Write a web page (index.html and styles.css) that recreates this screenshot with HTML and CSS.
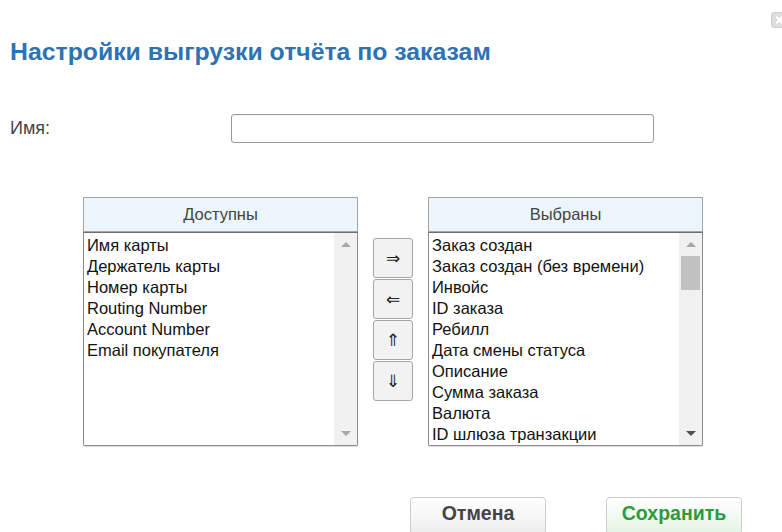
FILE: index.html
```html
<!DOCTYPE html>
<html lang="ru">
<head>
<meta charset="utf-8">
<title>Настройки выгрузки отчёта по заказам</title>
<link rel="stylesheet" href="styles.css">
</head>
<body>
<div class="dialog">
  <button class="close" type="button" aria-label="Закрыть"></button>
  <h1 class="title">Настройки выгрузки отчёта по заказам</h1>

  <div class="form-row">
    <label class="form-label" for="name">Имя:</label>
    <input class="text-input" id="name" type="text">
  </div>

  <div class="picker">
    <div class="column">
      <div class="column-head">Доступны</div>
      <div class="listbox">
        <ul class="items">
          <li>Имя карты</li>
          <li>Держатель карты</li>
          <li>Номер карты</li>
          <li>Routing Number</li>
          <li>Account Number</li>
          <li>Email покупателя</li>
        </ul>
        <div class="scrollbar">
          <span class="arrow arrow-up"></span>
          <span class="track"></span>
          <span class="arrow arrow-down"></span>
        </div>
      </div>
    </div>

    <div class="movers">
      <button class="mover" type="button">⇒</button>
      <button class="mover" type="button">⇐</button>
      <button class="mover" type="button">⇑</button>
      <button class="mover" type="button">⇓</button>
    </div>

    <div class="column">
      <div class="column-head">Выбраны</div>
      <div class="listbox">
        <ul class="items">
          <li>Заказ создан</li>
          <li>Заказ создан (без времени)</li>
          <li>Инвойс</li>
          <li>ID заказа</li>
          <li>Ребилл</li>
          <li>Дата смены статуса</li>
          <li>Описание</li>
          <li>Сумма заказа</li>
          <li>Валюта</li>
          <li>ID шлюза транзакции</li>
        </ul>
        <div class="scrollbar">
          <span class="arrow arrow-up"></span>
          <span class="track"><span class="thumb"></span></span>
          <span class="arrow arrow-down active"></span>
        </div>
      </div>
    </div>
  </div>

  <div class="footer">
    <button class="btn btn-cancel" type="button">Отмена</button>
    <button class="btn btn-save" type="button">Сохранить</button>
  </div>
</div>
</body>
</html>
```

FILE: styles.css
```css
* {
  box-sizing: border-box;
}

html, body {
  margin: 0;
  background: #fff;
  overflow: hidden;
}

body {
  font-family: "Liberation Sans", Arial, sans-serif;
  color: #222;
}

.dialog {
  position: relative;
  width: 782px;
  height: 532px;
  padding: 0 10px;
}

/* close control in the top-right corner, clipped by the window edge;
   the cross is drawn with two rotated bars */
.close {
  position: absolute;
  top: 12px;
  left: 771px;
  width: 18px;
  height: 16px;
  padding: 0;
  border: 1px solid #cfcfcf;
  border-radius: 3px;
  background: #dedede;
}

.close::before,
.close::after {
  content: "";
  position: absolute;
  top: 6px;
  left: 3px;
  width: 9px;
  height: 2px;
  background: #fff;
  transform: rotate(45deg);
}

.close::after {
  transform: rotate(-45deg);
}

.title {
  margin: 0;
  padding-top: 38px;
  font-size: 24.8px;
  line-height: 28px;
  font-weight: bold;
  color: #2e72b4;
}

.form-row {
  display: flex;
  align-items: center;
  margin-top: 48px;
}

.form-label {
  width: 221px;
  font-size: 18px;
  color: #444;
}

.text-input {
  width: 423px;
  height: 29px;
  border: 1px solid #9a9a9a;
  border-radius: 3px;
  background: #fff;
  box-shadow: inset 0 1px 1px rgba(0, 0, 0, 0.06);
}

.picker {
  display: flex;
  align-items: flex-start;
  gap: 15px;
  margin-top: 54px;
  margin-left: 73px;
}

.column {
  width: 275px;
}

.column-head {
  height: 35px;
  border: 1px solid #a3a3a3;
  background: #ebf5fb;
  color: #444;
  font-size: 16.5px;
  line-height: 33px;
  text-align: center;
}

.listbox {
  display: flex;
  height: 214px;
  border: 1px solid #8c8c8c;
  border-top-color: #6f6f6f;
  border-radius: 0 0 2px 2px;
  box-shadow: 0 1px 1px rgba(0, 0, 0, 0.15);
  background: #fff;
}

.items {
  flex: 1;
  margin: 0;
  padding: 2px 0 0 3px;
  list-style: none;
  overflow: hidden;
}

.items li {
  font-size: 16.5px;
  line-height: 21px;
  white-space: nowrap;
  color: #111;
}

.scrollbar {
  display: flex;
  flex-direction: column;
  align-items: center;
  width: 23px;
  background: #f1f1f1;
}

.track {
  flex: 1;
  align-self: stretch;
  padding: 0 2px;
}

.thumb {
  display: block;
  height: 34px;
  background: #c1c1c1;
}

.arrow {
  width: 0;
  height: 0;
  margin: 9px 0;
  border-left: 5px solid transparent;
  border-right: 5px solid transparent;
}

.arrow-up {
  border-bottom: 5px solid #a8a8a8;
}

.arrow-down {
  border-top: 5px solid #a8a8a8;
}

.arrow-down.active {
  border-top-color: #505050;
}

.movers {
  display: flex;
  flex-direction: column;
  gap: 1px;
  margin-top: 41px;
}

.mover {
  width: 40px;
  height: 40px;
  padding: 0;
  border: 1px solid #a6a6a6;
  border-radius: 3px;
  background: #f2f2f2;
  color: #222;
  font: 17px/1 "DejaVu Sans", sans-serif;
}

.footer {
  display: flex;
  justify-content: flex-end;
  gap: 60px;
  margin-top: 51px;
  padding-right: 30px;
}

.btn {
  width: 136px;
  height: 40px;
  padding: 0 0 7px;
  border: 1px solid #cfcfcf;
  border-radius: 4px;
  font: bold 19.5px/1 "Liberation Sans", Arial, sans-serif;
}

.btn-cancel {
  background: linear-gradient(#ffffff, #ececec);
  color: #444;
}

.btn-save {
  background: linear-gradient(#ffffff, #e2f3e2);
  color: #2f9a3c;
}
```
